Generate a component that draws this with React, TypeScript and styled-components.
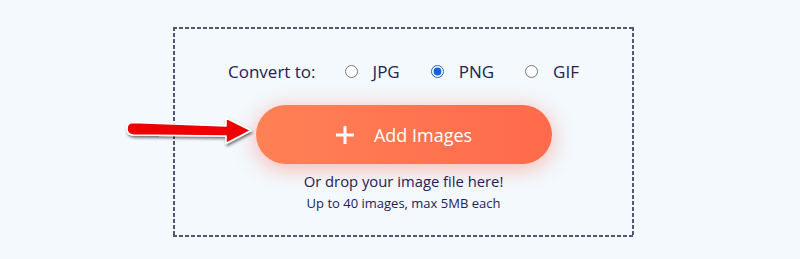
import { useState } from 'react';
import styled, { createGlobalStyle } from 'styled-components';

const GlobalStyle = createGlobalStyle`
  html, body {
    margin: 0;
    padding: 0;
    background: #f3f9fd;
    font-family: 'Open Sans', 'Noto Sans', sans-serif;
  }
`;

const StyledPage = styled.div`
  position: relative;
  width: 800px;
  height: 259px;
  padding-top: 27px;
  box-sizing: border-box;
`;

const StyledDropZone = styled.div`
  width: 461px;
  height: 210px;
  margin-left: 173px;
  box-sizing: border-box;
  padding-top: 32px;
  display: flex;
  flex-direction: column;
  align-items: center;
  /* dashed border drawn with gradients so the dash length matches */
  background-image:
    repeating-linear-gradient(90deg, #54547a 0 4px, transparent 4px 6px),
    repeating-linear-gradient(90deg, #54547a 0 4px, transparent 4px 6px),
    repeating-linear-gradient(180deg, #54547a 0 4px, transparent 4px 6px),
    repeating-linear-gradient(180deg, #54547a 0 4px, transparent 4px 6px);
  background-size: 100% 2px, 100% 2px, 2px 100%, 2px 100%;
  background-position: 0 0, 0 100%, 0 0, 100% 0;
  background-repeat: no-repeat;
`;

const StyledFormatRow = styled.div`
  display: flex;
  align-items: center;
  height: 24px;
  color: #222256;
  font-size: 17px;
`;

const StyledRowLabel = styled.span`
  margin-right: 29px;
`;

const StyledOption = styled.label`
  display: flex;
  align-items: center;
  gap: 15px;
  margin-right: 31px;
  cursor: pointer;

  &:last-child {
    margin-right: 0;
  }
`;

const StyledRadio = styled.input`
  width: 13px;
  height: 13px;
  margin: 0;
  accent-color: #1464d6;
`;

const StyledAddButton = styled.button`
  margin-top: 22px;
  width: 296px;
  height: 59px;
  border: none;
  border-radius: 30px;
  background: linear-gradient(90deg, #ff8156 0%, #ff6a4b 100%);
  box-shadow: 0 4px 22px rgba(255, 98, 70, 0.45);
  color: #ffffff;
  font-family: 'Open Sans', 'Noto Sans', sans-serif;
  font-size: 18px;
  display: flex;
  align-items: center;
  justify-content: center;
  gap: 19px;
  cursor: pointer;
`;

const StyledHint = styled.div<{ small?: boolean }>`
  color: #222256;
  font-size: ${props => (props.small ? '13px' : '14.8px')};
  line-height: ${props => (props.small ? '18px' : '20px')};
  margin-top: ${props => (props.small ? '3px' : '7px')};
`;

const StyledArrow = styled.svg`
  position: absolute;
  left: 120px;
  top: 110px;
  overflow: visible;
`;

const formats = ['JPG', 'PNG', 'GIF'];

const App = (): JSX.Element => {
  const [format, setFormat] = useState('PNG');

  return (
    <StyledPage>
      <GlobalStyle />
      <StyledDropZone>
        <StyledFormatRow>
          <StyledRowLabel>Convert to:</StyledRowLabel>
          {formats.map(f => (
            <StyledOption key={f}>
              <StyledRadio
                type="radio"
                name="format"
                checked={format === f}
                onChange={() => setFormat(f)}
              />
              {f}
            </StyledOption>
          ))}
        </StyledFormatRow>

        <StyledAddButton>
          <svg width="20" height="20" viewBox="0 0 20 20">
            <path d="M10 1v18M1 10h18" stroke="#fff" strokeWidth="3" />
          </svg>
          Add Images
        </StyledAddButton>

        <StyledHint>Or drop your image file here!</StyledHint>
        <StyledHint small>Up to 40 images, max 5MB each</StyledHint>
      </StyledDropZone>

      {/* annotation arrow pointing at the button */}
      <StyledArrow width="140" height="40" viewBox="0 0 140 40">
        <defs>
          <filter id="arrowShadow" x="-20%" y="-50%" width="140%" height="200%">
            <feDropShadow dx="1" dy="2" stdDeviation="1.6" floodColor="#000" floodOpacity="0.55" />
          </filter>
        </defs>
        <path
          d="M13 12.5 L106 16 L106 8 L131 20.5 L106 33.5 L106 26 L13 25 Q7 24.5 7 18.8 Q7 12.5 13 12.5 Z"
          fill="#ee0000"
          stroke="#ffffff"
          strokeWidth="1.6"
          strokeLinejoin="round"
          filter="url(#arrowShadow)"
        />
      </StyledArrow>
    </StyledPage>
  );
};

export default App;
